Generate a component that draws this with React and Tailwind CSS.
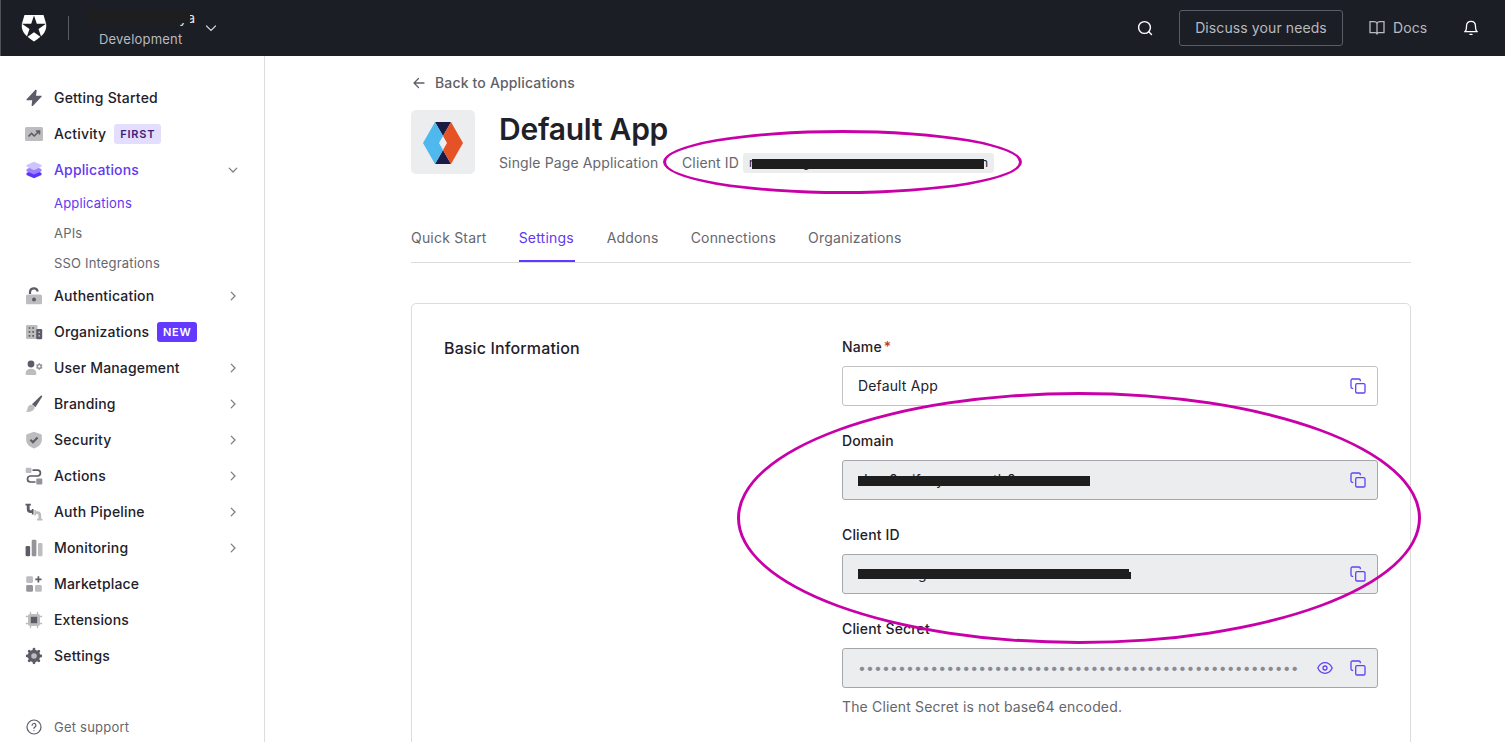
import React from "react";

const DARK = "#5b5c67";
const MID = "#94959a";
const LIGHT = "#bdbdbf";

function NavIcon({ children }) {
  return (
    <svg width="20" height="20" viewBox="0 0 20 20" fill="none" className="shrink-0">
      {children}
    </svg>
  );
}

const icons = {
  bolt: (
    <path d="M11.2 2 2.600 11.200c-.4.5-.2 1.100.4 1.100h5.200L7.600 17.400c0 .7.7.9 1.200.5L17.500 8.800c.4-.5.1-1.100-.5-1.100h-5l.7-5.100c0-.7-.9-1.100-1.500-.6Z" fill={DARK} />
  ),
  activity: (
    <>
      <rect x="1" y="3" width="18" height="14" rx="1.500" fill={LIGHT} />
      <path d="m4.500 12.500 3-3.200 2.800 2.700 4.700-4.700M11.800 7h3.700v3.600" stroke={DARK} strokeWidth="1.600" />
    </>
  ),
  layers: (
    <>
      <path d="m10 9.500 7.500 3.600v2L10 18.300l-7.500-3.200v-2Z" fill="#5c33fb" />
      <path d="m10 5.500 7.500 3.700v2L10 14.600l-7.500-3.400v-2Z" fill="#9b82fd" />
      <path d="m10 1.700 7.500 3.200v1.600L10 10.200 2.500 6.500V4.900Z" fill="#cfc3fe" />
    </>
  ),
  lock: (
    <>
      <path d="M6 8V6.300a3.900 3.900 0 0 1 7.700-.9" stroke={DARK} strokeWidth="2.200" />
      <rect x="2" y="8.500" width="16" height="9.800" rx="1.600" fill={LIGHT} />
      <circle cx="10" cy="13.500" r="2" fill={DARK} />
    </>
  ),
  buildings: (
    <>
      <rect x="2" y="3" width="11.500" height="14" rx="1" fill={LIGHT} />
      <path d="M4.600 6h1.700M8.300 6H10M4.600 9.900h1.700M8.300 9.900H10M4.600 13.800h1.700M8.300 13.800H10" stroke={DARK} strokeWidth="1.700" />
      <rect x="12.200" y="7" width="6" height="10.200" rx="1.200" fill={DARK} />
      <path d="M14.500 10.300h1.500M14.500 13.800h1.500" stroke={LIGHT} strokeWidth="1.400" />
    </>
  ),
  users: (
    <>
      <circle cx="7" cy="6" r="3.400" fill={DARK} />
      <path d="M1.600 15.700c0-3.300 2-4.900 5.400-4.900s5.400 1.600 5.400 4.900c0 .8-.4 1.200-1.200 1.200H2.800c-.8 0-1.200-.4-1.200-1.200Z" fill={LIGHT} />
      <circle cx="15.300" cy="8.500" r="1.900" stroke={MID} strokeWidth="1.500" />
      <path d="m15.300 5.200v1.300M15.300 10.500v1.300M12.400 6.900l1.200.7M17 9.500l1.200.7M12.400 10.200l1.200-.7M17 7.600l1.200-.7" stroke={MID} strokeWidth="1.400" />
    </>
  ),
  brush: (
    <>
      <path d="M8 10.200 16.700 1.800c.9-.7 1.900 0 1.300 1.100L11.400 13.200Z" fill={DARK} />
      <path d="M7.500 10.700c1.900.5 3 1.800 3.100 3.400-.8 3-4 4-8.800 3.900 1.800-1.200 1.300-3 2.100-5 .7-1.600 2-2.600 3.600-2.300Z" fill={LIGHT} />
    </>
  ),
  shield: (
    <>
      <path d="m10 1.800 7 2.500c.5.200.8.500.8 1v4.600c0 4.100-3.300 7-7.800 8.500-4.500-1.500-7.800-4.400-7.800-8.500V5.300c0-.5.300-.8.8-1Z" fill={LIGHT} />
      <path d="m6.400 9.800 2.500 2.500 4.700-4.800" stroke={DARK} strokeWidth="2" />
    </>
  ),
  actions: (
    <>
      <path d="M8.500 4.200h5a2.900 2.900 0 0 1 0 5.800H6.500a3 3 0 0 0 0 6H11.500" stroke={DARK} strokeWidth="1.700" />
      <rect x="1.700" y="1.700" width="5.800" height="5.200" rx="1" fill={LIGHT} />
      <rect x="12.300" y="12.600" width="6" height="5.800" rx="1" fill={MID} />
    </>
  ),
  pipeline: (
    <>
      <path d="M1.500 2.700h5.400M8.700 7v5.500" stroke={DARK} strokeWidth="1.700" />
      <path d="M4.200 3v4c0 1.700.8 2.700 2.500 2.700h2" stroke={DARK} strokeWidth="2.800" />
      <path d="M11.200 8v5.500M13 17.600h5.500" stroke={LIGHT} strokeWidth="1.700" />
      <path d="M11.200 10.700h1.800c1.800 0 2.800 1 2.800 2.700v4" stroke={LIGHT} strokeWidth="2.800" />
    </>
  ),
  bars: (
    <>
      <rect x="1.600" y="8" width="4.500" height="10.200" rx="1.200" fill={DARK} />
      <rect x="7.700" y="1.800" width="4.700" height="16.400" rx="1.200" fill={MID} />
      <rect x="14" y="4.900" width="4.500" height="13.300" rx="1.200" fill={LIGHT} />
    </>
  ),
  market: (
    <>
      <rect x="2.200" y="2.200" width="6.800" height="6.800" rx="1.400" fill={LIGHT} />
      <rect x="2.200" y="11" width="6.800" height="6.800" rx="1.400" fill={MID} />
      <rect x="11" y="11" width="6.800" height="6.800" rx="1.400" fill={LIGHT} />
      <path d="M14.400 2.200v6.200M11.300 5.300h6.200" stroke={DARK} strokeWidth="1.700" />
    </>
  ),
  chip: (
    <>
      <path d="M6.500 1.800v16.400M13.500 1.800v16.400M1.800 6.500h16.400M1.800 13.500h16.400" stroke={LIGHT} strokeWidth="1.300" />
      <rect x="4" y="4" width="12" height="12" rx="2" fill={LIGHT} />
      <rect x="6.800" y="6.800" width="6.400" height="6.400" fill={DARK} />
    </>
  ),
  gear: (
    <>
      <path d="M10 3.200v13.600M3.200 10h13.600M5.200 5.200l9.600 9.600M14.800 5.200l-9.600 9.600" stroke={DARK} strokeWidth="2.800" strokeLinecap="round" />
      <circle cx="10" cy="10" r="6.200" fill={DARK} />
      <circle cx="10" cy="10" r="2.800" fill={LIGHT} />
    </>
  ),
};

function Chevron({ down }) {
  return (
    <svg className="block" width="10" height="10" viewBox="0 0 10 10" fill="none" stroke="#7a7b82" strokeWidth="1.200" strokeLinecap="round" strokeLinejoin="round">
      <path d={down ? "M1.200 3.200 5 7l3.800-3.800" : "M3.200 1.200 7 5 3.200 8.800"} />
    </svg>
  );
}

function NavItem({ icon, label, arrow, active, children }) {
  return (
    <div className="flex h-9 shrink-0 items-center pl-6 pr-[26px]">
      <NavIcon>{icons[icon]}</NavIcon>
      <span className={active
        ? "ml-2.5 pb-0.5 text-[14px] font-medium tracking-[0.15px] text-[#6338f2]"
        : "ml-2.5 pb-0.5 text-[14px] font-medium tracking-[0.18px] text-[#1e212a]"}>
        {label}
      </span>
      {children}
      <span className="ml-auto">{arrow && <Chevron down={arrow === "down"} />}</span>
    </div>
  );
}

function CopyIcon() {
  return (
    <svg width="16" height="16" viewBox="0 0 16 16" fill="none" stroke="#6340f5" strokeWidth="1.300" strokeLinejoin="round">
      <rect x="5.700" y="5.700" width="9.300" height="9.300" rx="1.300" />
      <path d="M3.200 10.300H2.300A1.300 1.300 0 0 1 1 9V2.300A1.300 1.300 0 0 1 2.300 1H9a1.300 1.300 0 0 1 1.300 1.300v.9" />
    </svg>
  );
}

function EyeIcon() {
  return (
    <svg width="16" height="16" viewBox="0 0 16 16" fill="none" stroke="#6340f5" strokeWidth="1.300">
      <path d="M.8 8C2.400 4.600 4.900 2.700 8 2.700S13.600 4.600 15.200 8C13.600 11.400 11.100 13.300 8 13.300S2.400 11.400.8 8Z" />
      <circle cx="8" cy="8" r="2" />
    </svg>
  );
}

function Field({ label, required, filled, eye, children }) {
  return (
    <div className="h-[94px]">
      <div className="flex h-5 items-center text-[14px] font-medium tracking-[0.15px] text-[#1e212a]">
        {label}
        {required && <span className="ml-0.5 text-[#c8372d]">*</span>}
      </div>
      <div className={filled
        ? "mt-[10px] flex h-10 items-center rounded-[3px] border border-[#a5a6aa] bg-[#ecedef] pl-[15px] pr-[11px]"
        : "mt-[10px] flex h-10 items-center rounded-[3px] border border-[#c1c2c6] bg-white pl-[15px] pr-[11px]"}>
        <div className="relative flex-1 text-[14px] leading-5 tracking-[0.15px] text-[#1e212a]">{children}</div>
        {eye && <span className="mr-[17px]"><EyeIcon /></span>}
        <CopyIcon />
      </div>
    </div>
  );
}

function Header() {
  return (
    <header className="flex h-14 shrink-0 items-center border-l border-[#50525a] bg-[#1c1e26]">
      <svg className="ml-5" width="26" height="28" viewBox="0 0 26 28">
        <path d="M3.500 1h19L25 9.300c1.300 7.200-2.300 12-12 18.200C3.300 21.300-.3 16.500 1 9.300Z" fill="#fff" />
        <path d="m13 1.500 2.800 8.200H25l-7.500 5.200 2.900 8.700L13 18.300l-7.400 5.300 2.900-8.700L1 9.700h9.200Z" fill="#1c1e26" />
      </svg>
      <div className="ml-[21px] h-6 w-px bg-[#595b63]" />
      <div className="ml-[30px] flex w-[97px] flex-col">
        <div className="relative h-5 pr-px text-right text-[14px] leading-5 text-[#e3e4e6]">
          <span>ya</span>
          <span className="absolute top-[3px] -left-[10px] h-3 w-[101px] bg-[#1e1e1e]" />
        </div>
        <span className="mt-px h-5 text-[13px] leading-[21px] tracking-[0.2px] text-[#b9babf]">Development</span>
      </div>
      <svg className="ml-[9px]" width="12" height="12" viewBox="0 0 12 12" fill="none" stroke="#d0d1d4" strokeWidth="1.200" strokeLinecap="round">
        <path d="m1.500 4 4.500 4.500L10.500 4" />
      </svg>
      <svg className="ml-auto" width="16" height="16" viewBox="0 0 16 16" fill="none" stroke="#fff" strokeWidth="1.400" strokeLinecap="round">
        <circle cx="7.500" cy="7.500" r="5.900" />
        <path d="m11.800 11.800 2.700 2.700" />
      </svg>
      <button className="ml-[26px] flex h-9 w-[164px] items-center justify-center rounded-[3px] border border-[#5b5d66] pb-px text-[14px] tracking-[0.1px] text-[#b9babf]">
        Discuss your needs
      </button>
      <svg className="ml-[26px]" width="16" height="16" viewBox="0 0 16 16" fill="none" stroke="#b9babf" strokeWidth="1.300">
        <path d="M8 3.500C7.600 2.400 6.500 1.700 5 1.700H1v11h5c1.200 0 2 .7 2 1.800 0-1.100.8-1.800 2-1.800h5v-11h-4C9.500 1.700 8.400 2.400 8 3.500ZM8 3.500v11" />
      </svg>
      <span className="ml-2 w-[34px] pb-px text-[14px] tracking-[0.1px] text-[#b9babf]">Docs</span>
      <svg className="ml-9 mr-[26px]" width="16" height="16" viewBox="0 0 16 16" fill="none" stroke="#fff" strokeWidth="1.300" strokeLinejoin="round" strokeLinecap="round">
        <path d="M1.700 11.700c1.500-.9 1.800-2 1.800-5.500C3.500 3 5.400 1.300 8 1.300S12.500 3 12.500 6.200c0 3.500.3 4.600 1.800 5.500ZM7 14.400h2" />
      </svg>
    </header>
  );
}

function Sidebar() {
  return (
    <aside className="flex w-[265px] shrink-0 flex-col border-r border-[#dcdcdf] pt-6">
      <NavItem icon="bolt" label="Getting Started" />
      <NavItem icon="activity" label="Activity">
        <span className="ml-2 flex h-5 w-[47px] items-center justify-center rounded-[3px] bg-[#e4defe] text-[11px] font-semibold tracking-[0.8px] text-[#3f1d78]">FIRST</span>
      </NavItem>
      <NavItem icon="layers" label="Applications" arrow="down" active />
      <div className="flex shrink-0 flex-col pl-[54px] text-[13px] tracking-[0.18px] text-[#65676e]">
        <span className="h-[30px] leading-[31px] text-[#6338f2]">Applications</span>
        <span className="h-[30px] leading-[31px]">APIs</span>
        <span className="h-[30px] leading-[31px]">SSO Integrations</span>
      </div>
      <NavItem icon="lock" label="Authentication" arrow="right" />
      <NavItem icon="buildings" label="Organizations">
        <span className="ml-2 flex h-5 w-10 items-center justify-center rounded-[3px] bg-[#6339ff] text-[11px] font-semibold tracking-[0.8px] text-white">NEW</span>
      </NavItem>
      <NavItem icon="users" label="User Management" arrow="right" />
      <NavItem icon="brush" label="Branding" arrow="right" />
      <NavItem icon="shield" label="Security" arrow="right" />
      <NavItem icon="actions" label="Actions" arrow="right" />
      <NavItem icon="pipeline" label="Auth Pipeline" arrow="right" />
      <NavItem icon="bars" label="Monitoring" arrow="right" />
      <NavItem icon="market" label="Marketplace" />
      <NavItem icon="chip" label="Extensions" />
      <NavItem icon="gear" label="Settings" />
      <div className="mt-[35px] flex h-9 shrink-0 items-center pl-[26px] text-[13px] tracking-[0.22px] text-[#65676e]">
        <svg width="16" height="16" viewBox="0 0 16 16" fill="none" stroke="#5b5c67" strokeWidth="1.200" strokeLinecap="round">
          <circle cx="8" cy="8" r="7" />
          <path d="M6.100 6.300a1.900 1.900 0 1 1 2.700 1.800c-.6.300-.8.600-.8 1.200M8 11.500v.1" />
        </svg>
        <span className="ml-3 pt-px">Get support</span>
      </div>
    </aside>
  );
}

function AppLogo() {
  return (
    <div className="flex size-16 items-center justify-center rounded-[5px] bg-[#ecedef] pt-px">
      <svg width="40" height="42" viewBox="0 0 40 42">
        <path d="M12 0h16l-8 14ZM12 42h16l-8-14Z" fill="#1b1c46" />
        <path d="M12 0 0 21l12 21 8-14-4-7 4-7Z" fill="#4fb9ef" />
        <path d="m28 0 12 21-12 21-8-14 4-7-4-7Z" fill="#e55225" />
      </svg>
    </div>
  );
}

export default function App() {
  return (
    <div className="relative flex h-[742px] w-[1505px] flex-col overflow-hidden bg-white font-['Inter','Liberation_Sans',sans-serif]">
      <Header />
      <div className="flex min-h-0 flex-1">
        <Sidebar />
        <main className="w-[1146px] pl-[146px] pt-4">
          <div className="flex h-[22px] items-center text-[14px] font-medium tracking-[0.16px] text-[#5f6068]">
            <svg className="ml-0.5 mr-2.5" width="12" height="12" viewBox="0 0 12 12" fill="none" stroke="#5f6068" strokeWidth="1.300" strokeLinecap="round" strokeLinejoin="round">
              <path d="M11 6H1m4.500-4.500L1 6l4.500 4.500" />
            </svg>
            <span className="pb-px">Back to Applications</span>
          </div>
          <div className="mt-4 flex h-16">
            <AppLogo />
            <div className="ml-6">
              <h1 className="h-[38px] text-[30px] font-semibold leading-[38px] tracking-[-0.25px] text-[#1e212a]">Default App</h1>
              <div className="mt-[5px] flex h-5 items-center text-[14px] tracking-[0.13px] text-[#65676e]">
                <span className="w-[183px] pb-0.5">Single Page Application</span>
                <span className="w-[61px] pb-0.5">Client ID</span>
                <span className="relative flex h-5 w-[251px] items-center justify-between rounded-[3px] bg-[#ecedef] px-1.5 text-[12px] tracking-normal text-[#1e212a]">
                  <span>r</span>
                  <span className="mr-[122px]">g</span>
                  <span>n</span>
                  <span className="absolute left-[9px] top-1.5 h-2.5 w-[232px] bg-[#1e1e1e]" />
                </span>
              </div>
            </div>
          </div>
          <nav className="mt-[41px] flex h-12 gap-8 border-b border-[#dcdcdf] text-[14px] leading-[46px] tracking-[0.19px] text-[#65676e]">
            <span>Quick Start</span>
            <span className="w-14 border-b-2 border-[#6339ff] text-[#6338f2]">Settings</span>
            <span>Addons</span>
            <span>Connections</span>
            <span className="tracking-[0.15px]">Organizations</span>
          </nav>
          <section className="mt-10 flex h-[500px] rounded-[5px] border border-[#dcdcdf] pl-8 pr-8 pt-8">
            <h2 className="w-[398px] pt-px text-[16px] font-medium leading-[22px] tracking-[0.13px] text-[#1e212a]">Basic Information</h2>
            <div className="flex-1">
              <Field label="Name" required>Default App</Field>
              <Field label="Domain" filled>
                <span className="absolute left-[1px] top-0">d</span>
                <span className="absolute left-[31px] top-0">0</span>
                <span className="absolute left-[54px] top-0">if</span>
                <span className="pl-[78px]">y</span>
                <span className="absolute left-[135px] top-0">th</span>
                <span className="absolute left-[149px] top-0">0</span>
                <span className="absolute left-0 top-[6px] h-2.5 w-[232px] bg-[#1e1e1e]" />
              </Field>
              <Field label="Client ID" filled>
                <span className="pl-[60px]">g</span>
                <span className="absolute left-0 top-[5px] h-2.5 w-[271px] bg-[#1e1e1e]" />
                <span className="absolute left-[270px] top-2 h-[7px] w-[3px] bg-[#1e1e1e]" />
              </Field>
              <Field label="Client Secret" filled eye>
                <span className="whitespace-nowrap tracking-[0.14px] text-[#8b8c91]">{"•".repeat(55)}</span>
              </Field>
              <p className="-mt-[15px] text-[14px] leading-5 tracking-[0.15px] text-[#65676e]">The Client Secret is not base64 encoded.</p>
            </div>
          </section>
        </main>
      </div>
      <div className="absolute left-[663px] top-[130px] h-16 w-[359px] rounded-[50%] border-[3px] border-[#c800a7]" />
      <div className="absolute left-[737px] top-[392px] h-[252px] w-[684px] rounded-[50%] border-[3px] border-[#c800a7]" />
    </div>
  );
}
